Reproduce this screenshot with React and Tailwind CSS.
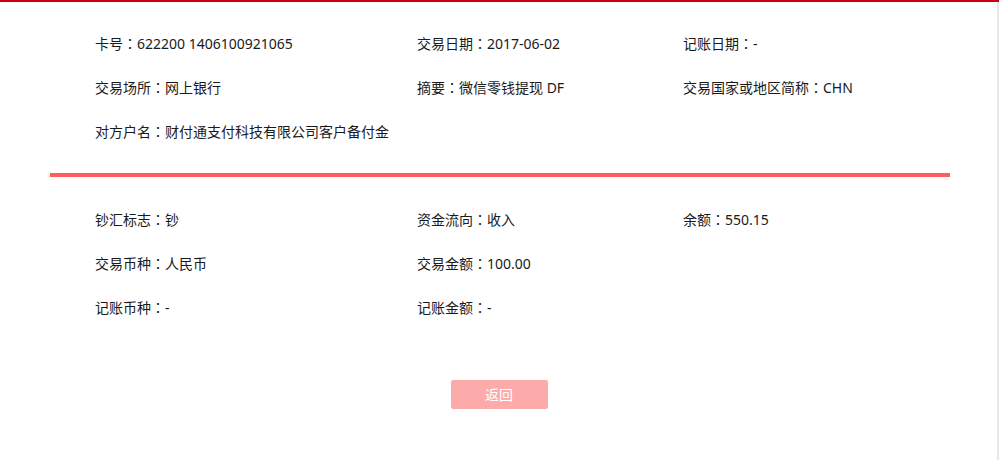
import React from "react";

const topRows = [
  [
    { label: "卡号", value: "622200 1406100921065" },
    { label: "交易日期", value: "2017-06-02" },
    { label: "记账日期", value: "-" },
  ],
  [
    { label: "交易场所", value: "网上银行" },
    { label: "摘要", value: "微信零钱提现 DF" },
    { label: "交易国家或地区简称", value: "CHN" },
  ],
  [{ label: "对方户名", value: "财付通支付科技有限公司客户备付金" }],
];

const bottomRows = [
  [
    { label: "钞汇标志", value: "钞" },
    { label: "资金流向", value: "收入" },
    { label: "余额", value: "550.15" },
  ],
  [
    { label: "交易币种", value: "人民币" },
    { label: "交易金额", value: "100.00" },
  ],
  [
    { label: "记账币种", value: "-" },
    { label: "记账金额", value: "-" },
  ],
];

const InfoBlock = ({ rows }) => {
  return (
    <div className="px-[45px]">
      {rows.map((row, i) => (
        <div key={i} className="grid grid-cols-[322px_266px_1fr] h-[44px] items-center">
          {row.map((item) => (
            <div key={item.label} className="whitespace-nowrap">
              {item.label}
              {/* centred full-width colon, like the reference */}
              <span style={{ fontFamily: '"Noto Sans CJK TC", sans-serif' }}>：</span>
              {item.value}
            </div>
          ))}
        </div>
      ))}
    </div>
  );
};

const App = () => {
  return (
    <div
      className="w-[999px] h-[460px] bg-white border-t-2 border-[#c9000e] text-[14px] text-[#1a1a1a] overflow-hidden"
      style={{ fontFamily: '"Noto Sans", "Noto Sans CJK SC", sans-serif' }}
    >
      <div className="h-full border-r-2 border-[#e8e8e8]">
        <div className="w-[900px] ml-[50px] pt-[19px]">
          <InfoBlock rows={topRows} />
          <div className="mt-[20px] h-[4px] bg-[#ff5c5c]" />
          <div className="pt-[20px]">
            <InfoBlock rows={bottomRows} />
          </div>
          <div className="flex justify-center pt-[51px] pr-[2px]">
            <button className="w-[97px] h-[29px] rounded-[2px] bg-[#fdaaab] text-white text-[14px]">
              返回
            </button>
          </div>
        </div>
      </div>
    </div>
  );
};

export default App;
